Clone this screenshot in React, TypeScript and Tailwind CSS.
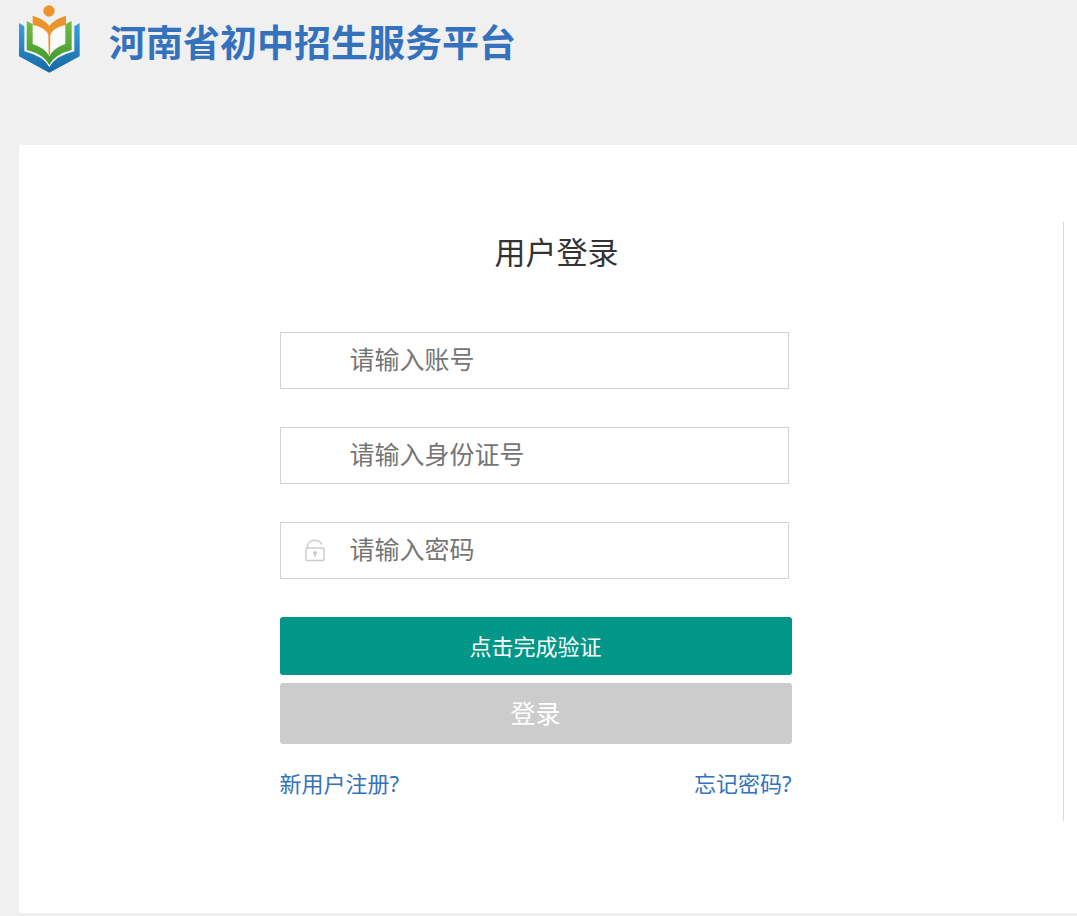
import type { InputHTMLAttributes, ReactNode } from "react";

function Logo() {
  return (
    <svg className="h-[68px] w-[61px] shrink-0" viewBox="57 14 183 204" aria-hidden="true">
      <defs>
        <linearGradient id="logo-blue" x1="0" y1="0" x2="0" y2="1">
          <stop offset="0" stopColor="#36a3dd" />
          <stop offset="1" stopColor="#1667a4" />
        </linearGradient>
        <linearGradient id="logo-green" x1="0" y1="0" x2="0" y2="1">
          <stop offset="0" stopColor="#76bd3e" />
          <stop offset="1" stopColor="#3f982f" />
        </linearGradient>
      </defs>
      <path fill="url(#logo-blue)" d="M57 68 L73 78 V153 Q130 168 148 199 Q166 168 223 153 V78 L239 68 V168 L148 217 L57 168 Z" />
      <path fill="#fafafa" d="M77 66 L97 72 L148 88 L197 72 L219 66 V151 Q166 164 148 199 Q130 164 77 151 Z" />
      <path fill="url(#logo-green)" d="M80 62 L98 72 V131 Q136 143 148 168 Q160 143 196 131 V72 L215 62 V149 Q164 162 148 194 Q132 162 80 149 Z" />
      <path fill="#ec932b" d="M98 46 Q136 58 148 77 Q160 58 198 46 V74 Q158 82 151 104 L150 165 H146 L145 104 Q138 82 98 74 Z" />
      <circle cx="147" cy="32" r="17" fill="#ec932b" />
    </svg>
  );
}

function OpenLockIcon() {
  return (
    <svg className="h-6 w-5" viewBox="0 0 20 24" fill="none" stroke="#cccccc" strokeWidth="1.5" aria-hidden="true">
      <rect x="1" y="9" width="18" height="12.5" rx="1" />
      <path d="M2.5 9V7.5C2.5 3.8 5.5 1.2 9.5 1.2C13 1.2 15.7 2.8 17 5.5" />
      <circle cx="10" cy="14" r="1.3" fill="#cccccc" />
      <path d="M10 14v4" />
    </svg>
  );
}

type FieldProps = InputHTMLAttributes<HTMLInputElement> & { icon?: ReactNode };

function Field({ icon, id, placeholder, ...rest }: FieldProps) {
  return (
    <div className="mr-[3px] flex h-[57px] items-center border border-[#d2d2d2] bg-white">
      <label htmlFor={id} aria-label={placeholder} className="flex w-[69px] shrink-0 justify-center">
        {icon}
      </label>
      <input
        id={id}
        placeholder={placeholder}
        className="h-full min-w-0 flex-1 bg-transparent pr-4 pb-1 text-[25px] text-[#333333] outline-none placeholder:text-[#757575]"
        {...rest}
      />
    </div>
  );
}

export default function App() {
  return (
    <div className="min-h-screen bg-[#f0f0f0] pb-[3px] pl-[19px] font-['Noto_Sans','Noto_Sans_CJK_SC',sans-serif]">
      <header className="flex h-[145px] items-start gap-[29px] pt-[5px]">
        <Logo />
        <h1 className="pt-[10px] text-[37px] leading-[56px] font-bold text-[#3472bd]">河南省初中招生服务平台</h1>
      </header>
      <main className="bg-white pt-[77px] pr-[13px] pb-[92px]">
        <section className="flex justify-center border-r border-[#d8d8d8] pr-[11px] pb-[22px]">
          <form className="w-full max-w-[512px]" onSubmit={(event) => event.preventDefault()}>
            <h2 className="pt-[6px] pl-[42px] text-center text-[31px] leading-[48px] text-[#333333]">用户登录</h2>
            <div className="mt-[56px] flex flex-col gap-[38px]">
              <Field id="account" type="text" placeholder="请输入账号" autoComplete="username" />
              <Field id="id-number" type="text" placeholder="请输入身份证号" />
              <Field
                id="password"
                type="password"
                placeholder="请输入密码"
                autoComplete="current-password"
                icon={<OpenLockIcon />}
              />
            </div>
            <div className="mt-[38px] flex flex-col gap-2">
              <button type="button" className="h-[58px] rounded-[3px] bg-[#009688] text-[22px] text-white">
                点击完成验证
              </button>
              <button type="submit" className="h-[61px] rounded-[3px] bg-[#cccccc] text-[25px] text-white">
                登录
              </button>
            </div>
            <nav className="mt-[23px] flex justify-between text-[22px] leading-[32px] text-[#3472bd]">
              <a href="#register">新用户注册?</a>
              <a href="#forgot">忘记密码?</a>
            </nav>
          </form>
        </section>
      </main>
    </div>
  );
}
